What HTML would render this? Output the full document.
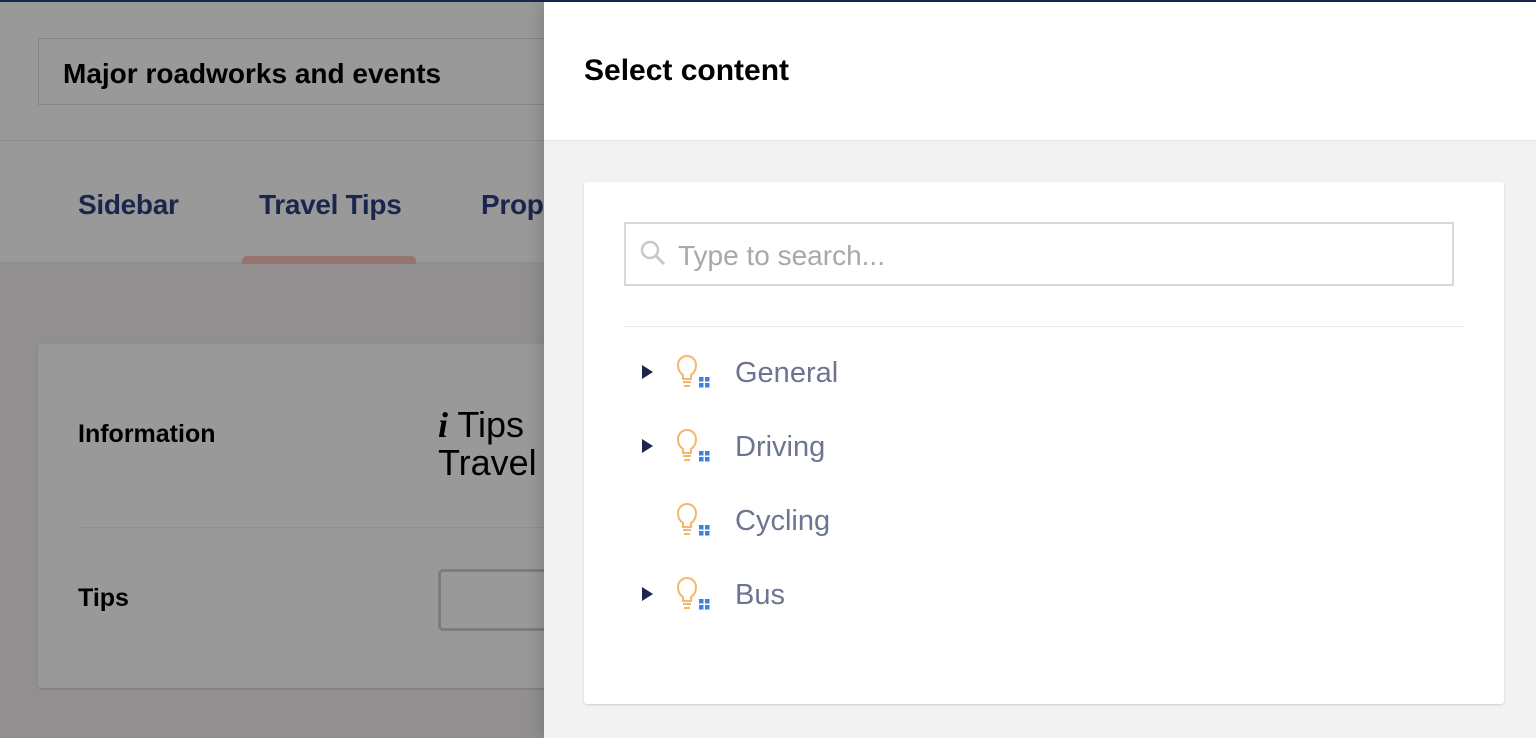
<!DOCTYPE html>
<html><head><style>
*{margin:0;padding:0;box-sizing:border-box}
body{width:1536px;height:738px;overflow:hidden;font-family:"Liberation Sans",sans-serif;background:#918f8f;position:relative}
.topbar{position:absolute;top:0;left:0;width:1536px;height:2px;background:#1b264f}
.hdr{position:absolute;top:2px;left:0;width:544px;height:139px;background:#999;border-bottom:1px solid #8c8c8c}
.name{position:absolute;left:38px;top:38px;width:520px;height:67px;border:1px solid #868686;font-size:28px;font-weight:bold;color:#000;padding:19px 24px}
.tabs{position:absolute;top:141px;left:0;width:544px;height:122px;background:#999;border-bottom:1px solid #8c8c8c}
.tab{position:absolute;top:48px;font-size:28px;font-weight:bold;color:#1b264f;letter-spacing:-0.3px}
.ul{position:absolute;left:242px;top:256px;width:174px;height:8px;background:#967470;border-radius:5px 5px 0 0}
.card{position:absolute;left:38px;top:344px;width:520px;height:344px;background:#999;border-radius:3px;box-shadow:0 1px 2px rgba(0,0,0,.15)}
.lbl{position:absolute;left:40px;font-size:25px;font-weight:bold;color:#000}
.panel{position:absolute;left:544px;top:2px;width:992px;height:736px;background:#f3f2f2;box-shadow:-6px 0 12px rgba(0,0,0,.12)}
.ph{height:139px;background:#fff;border-bottom:1px solid #e4e4e4;padding:52px 40px;font-size:30px;font-weight:bold;color:#000}
.box{position:absolute;left:40px;top:180px;width:920px;height:522px;background:#fff;border-radius:3px;box-shadow:0 1px 2px rgba(0,0,0,.15)}
.search{position:absolute;left:40px;top:40px;width:830px;height:64px;border:2px solid #d8d8d8;font-size:28px;color:#a8a8a8;padding:16px 0 0 52px}
.sep{position:absolute;left:40px;top:144px;width:840px;height:1px;background:#ebebeb}
.row{position:absolute;left:58px;height:40px;font-size:29px;color:#6d7590}
.row .tri{position:absolute;left:0;top:10px;width:0;height:0;border-left:11px solid #1b264f;border-top:7px solid transparent;border-bottom:7px solid transparent}
.row svg{position:absolute;left:34px;top:-2px}
.row span{position:absolute;left:93px;top:2px;white-space:nowrap}
</style></head><body>
<div class="topbar"></div>
<div class="hdr"></div>
<div class="name">Major roadworks and events</div>
<div class="tabs">
<div class="tab" style="left:78px">Sidebar</div>
<div class="tab" style="left:259px">Travel Tips</div>
<div class="tab" style="left:481px">Prop</div>
</div>
<div class="ul"></div>
<div class="card">
<div class="lbl" style="top:76px">Information</div>
<div style="position:absolute;left:400px;top:62px;font-size:36px;color:#000;line-height:38px"><i style="font-family:'Liberation Serif',serif;font-weight:bold">i</i> Tips<br>Travel</div>
<div style="position:absolute;left:40px;top:183px;width:480px;height:1px;background:#8f8f8f"></div>
<div class="lbl" style="top:240px">Tips</div>
<div style="position:absolute;left:400px;top:225px;width:130px;height:62px;border:3px solid #7d7d7d;border-radius:5px"></div>
</div>
<div class="panel">
<div class="ph">Select content</div>
<div class="box">
<div class="search"><svg style="position:absolute;left:14px;top:16px" width="26" height="26" viewBox="0 0 26 26"><circle cx="10" cy="10" r="8" fill="none" stroke="#c8c8c8" stroke-width="2.5"/><path d="M16 16l8 8" stroke="#c8c8c8" stroke-width="3"/></svg>Type to search...</div>
<div class="sep"></div>
<div class="row" style="top:173px"><div class="tri"></div><svg width="40" height="40" viewBox="0 0 40 40"><path d="M7 26v-4C4 20 2 17 2 12a9 9 0 0118 0c0 5-2 8-5 10v4z" fill="none" stroke="#f5b86a" stroke-width="2"/><path d="M7 29h8M8 33h6" stroke="#f5b86a" stroke-width="2"/><g fill="#3b82e0"><rect x="23" y="24" width="4.5" height="4.5"/><rect x="29" y="24" width="4.5" height="4.5"/><rect x="23" y="30" width="4.5" height="4.5"/><rect x="29" y="30" width="4.5" height="4.5"/></g></svg><span>General</span></div>
<div class="row" style="top:247px"><div class="tri"></div><svg width="40" height="40" viewBox="0 0 40 40"><path d="M7 26v-4C4 20 2 17 2 12a9 9 0 0118 0c0 5-2 8-5 10v4z" fill="none" stroke="#f5b86a" stroke-width="2"/><path d="M7 29h8M8 33h6" stroke="#f5b86a" stroke-width="2"/><g fill="#3b82e0"><rect x="23" y="24" width="4.5" height="4.5"/><rect x="29" y="24" width="4.5" height="4.5"/><rect x="23" y="30" width="4.5" height="4.5"/><rect x="29" y="30" width="4.5" height="4.5"/></g></svg><span>Driving</span></div>
<div class="row" style="top:321px"><svg width="40" height="40" viewBox="0 0 40 40"><path d="M7 26v-4C4 20 2 17 2 12a9 9 0 0118 0c0 5-2 8-5 10v4z" fill="none" stroke="#f5b86a" stroke-width="2"/><path d="M7 29h8M8 33h6" stroke="#f5b86a" stroke-width="2"/><g fill="#3b82e0"><rect x="23" y="24" width="4.5" height="4.5"/><rect x="29" y="24" width="4.5" height="4.5"/><rect x="23" y="30" width="4.5" height="4.5"/><rect x="29" y="30" width="4.5" height="4.5"/></g></svg><span>Cycling</span></div>
<div class="row" style="top:395px"><div class="tri"></div><svg width="40" height="40" viewBox="0 0 40 40"><path d="M7 26v-4C4 20 2 17 2 12a9 9 0 0118 0c0 5-2 8-5 10v4z" fill="none" stroke="#f5b86a" stroke-width="2"/><path d="M7 29h8M8 33h6" stroke="#f5b86a" stroke-width="2"/><g fill="#3b82e0"><rect x="23" y="24" width="4.5" height="4.5"/><rect x="29" y="24" width="4.5" height="4.5"/><rect x="23" y="30" width="4.5" height="4.5"/><rect x="29" y="30" width="4.5" height="4.5"/></g></svg><span>Bus</span></div>
</div>
</div>
</body></html>
